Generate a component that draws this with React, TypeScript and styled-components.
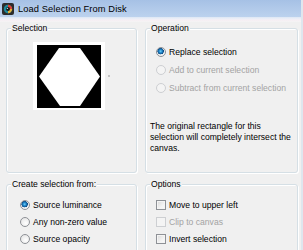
import styled, { createGlobalStyle } from 'styled-components';

const GlobalStyle = createGlobalStyle`
  html, body {
    margin: 0;
    padding: 0;
    background: #f0f0f0;
  }
  body {
    font-family: "Liberation Sans", Arial, sans-serif;
    font-size: 8.6px;
    color: #000;
  }
`;

const Window = styled.div`
  width: 303px;
  height: 250px;
  box-sizing: border-box;
  overflow: hidden;
  display: flex;
  flex-direction: column;
  background: #f0f0f0;
  border-right: 2px solid #dfe6ee;
  & > * {
    flex: none;
  }
`;

const TitleBar = styled.div`
  height: 17px;
  display: flex;
  align-items: center;
  gap: 4px;
  padding-left: 2px;
  background: linear-gradient(#a6c1e5, #bcd2ee);
`;

const Title = styled.span`
  font-size: 9.3px;
  color: #000;
  letter-spacing: 0.1px;
`;

const FrameStrip = styled.div`
  height: 5px;
  background: linear-gradient(#dce7f4 0, #eef0f8 40%, #f6eef3 60%, #f4f4f4 100%);
`;

const Body = styled.div`
  display: grid;
  grid-template-columns: 131px 153px;
  grid-template-rows: 151px 100px;
  column-gap: 8px;
  row-gap: 5px;
  padding-left: 6px;
`;

const Group = styled.fieldset`
  margin: 0;
  padding: 0;
  min-width: 0;
  border: 1px solid #d5dfe5;
  border-radius: 3px;
  box-shadow: inset 1px 1px 0 #fff, 1px 1px 0 #fff;
`;

const Legend = styled.legend`
  margin-left: 4px;
  padding: 0 1px;
  line-height: 12px;
  background: #f0f0f0;
`;

const PreviewRow = styled.div`
  display: flex;
  align-items: center;
  gap: 3px;
  margin-top: 8px;
  padding-left: 26px;
`;

const PreviewFrame = styled.div`
  display: flex;
  background: #fff;
  padding: 3px 4px 2px 4px;
`;

const PreviewDot = styled.span`
  width: 2px;
  height: 2px;
  background: #c4c4c4;
`;

const OptionList = styled.div<{ $top: number; $left: number; $row: number }>`
  display: flex;
  flex-direction: column;
  margin-top: ${(p) => p.$top}px;
  padding-left: ${(p) => p.$left}px;
  & > label {
    height: ${(p) => p.$row}px;
  }
`;

const OptionRow = styled.label<{ $disabled?: boolean }>`
  display: flex;
  align-items: center;
  gap: 2px;
  color: ${(p) => (p.$disabled ? '#a3a3a3' : '#000')};
  white-space: nowrap;
`;

const Radio = styled.input.attrs({ type: 'radio', readOnly: true })`
  appearance: none;
  margin: 0 1px 0 0;
  width: 10px;
  height: 10px;
  border-radius: 50%;
  box-sizing: border-box;
  border: 1px solid #8e9196;
  background: radial-gradient(circle at 60% 65%, #ffffff 0, #e6e6e6 80%);
  flex: none;

  &:checked {
    background: radial-gradient(circle at 45% 40%, #6fd0fb 0, #1f86c9 1.6px, #0d4c85 3px, #e9ecef 3.4px, #ffffff 100%);
  }
  &:disabled {
    border-color: #cdcfd2;
    background: #f4f4f4;
  }
`;

const Check = styled.input.attrs({ type: 'checkbox', readOnly: true })`
  appearance: none;
  margin: 0 1px 0 0;
  width: 10px;
  height: 10px;
  box-sizing: border-box;
  border: 1px solid #8e9196;
  background: linear-gradient(135deg, #d8d8d8 0, #f2f2f2 60%, #fbfbfb 100%);
  box-shadow: inset 0 0 0 1px #f4f4f4;
  flex: none;

  &:disabled {
    border-color: #cdcfd2;
    background: #f4f4f4;
    box-shadow: none;
  }
`;

const Note = styled.p`
  margin: 24px 0 0 4px;
  line-height: 11px;
  white-space: nowrap;
`;

function AppIcon() {
  return (
    <svg width="12" height="12" viewBox="0 0 12 12">
      <rect x="0" y="0" width="12" height="12" rx="2" fill="#2c2c2c" />
      <circle cx="6" cy="6" r="4.2" fill="#1c8a9c" />
      <path d="M6 1.8 A4.2 4.2 0 0 1 10.2 6 L6 6 Z" fill="#d8433b" />
      <path d="M10.2 6 A4.2 4.2 0 0 1 6 10.2 L6 6 Z" fill="#e2b23c" />
      <circle cx="6" cy="6" r="2" fill="#1a1a1a" />
      <circle cx="5.4" cy="5.4" r="0.7" fill="#9fd8e8" />
    </svg>
  );
}

function SelectionPreview() {
  return (
    <svg width="64" height="63" viewBox="0 0 64 63">
      <rect width="64" height="63" fill="#000" />
      <polygon points="22,3 43,3 63,31.5 43,61 23,61 2,31.5" fill="#fff" />
    </svg>
  );
}

export default function App() {
  return (
    <>
      <GlobalStyle />
      <Window>
        <TitleBar>
          <AppIcon />
          <Title>Load Selection From Disk</Title>
        </TitleBar>
        <FrameStrip />
        <Body>
          <Group>
            <Legend>Selection</Legend>
            <PreviewRow>
              <PreviewFrame>
                <SelectionPreview />
              </PreviewFrame>
              <PreviewDot />
            </PreviewRow>
          </Group>

          <Group>
            <Legend>Operation</Legend>
            <OptionList $top={9} $left={10} $row={18}>
              <OptionRow>
                <Radio name="op" defaultChecked />
                Replace selection
              </OptionRow>
              <OptionRow $disabled>
                <Radio name="op" disabled />
                Add to current selection
              </OptionRow>
              <OptionRow $disabled>
                <Radio name="op" disabled />
                Subtract from current selection
              </OptionRow>
            </OptionList>
            <Note>
              The original rectangle for this
              <br />
              selection will completely intersect the
              <br />
              canvas.
            </Note>
          </Group>

          <Group>
            <Legend>Create selection from:</Legend>
            <OptionList $top={6} $left={13} $row={17}>
              <OptionRow>
                <Radio name="src" defaultChecked />
                Source luminance
              </OptionRow>
              <OptionRow>
                <Radio name="src" />
                Any non-zero value
              </OptionRow>
              <OptionRow>
                <Radio name="src" />
                Source opacity
              </OptionRow>
            </OptionList>
          </Group>

          <Group>
            <Legend>Options</Legend>
            <OptionList $top={6} $left={10} $row={17}>
              <OptionRow>
                <Check />
                Move to upper left
              </OptionRow>
              <OptionRow $disabled>
                <Check disabled />
                Clip to canvas
              </OptionRow>
              <OptionRow>
                <Check />
                Invert selection
              </OptionRow>
            </OptionList>
          </Group>
        </Body>
      </Window>
    </>
  );
}
